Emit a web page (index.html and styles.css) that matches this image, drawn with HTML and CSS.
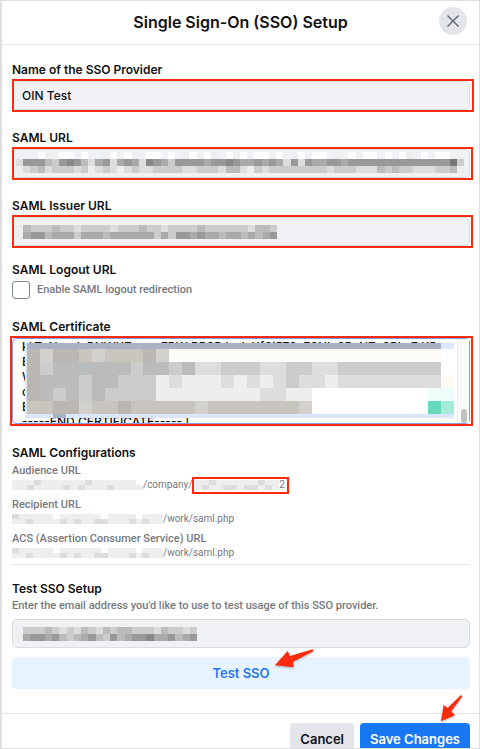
FILE: index.html
```html
<!DOCTYPE html>
<html lang="en">
<head>
    <meta charset="UTF-8">
    <meta name="viewport" content="width=device-width, initial-scale=1.0">
    <title>Single Sign-On (SSO) Setup</title>
    <link rel="stylesheet" href="styles.css">
</head>
<body>

<div class="dialog" role="dialog" aria-labelledby="dialogTitle">
    <header class="dialog-header">
        <h1 id="dialogTitle">Single Sign-On (SSO) Setup</h1>
        <button class="close" type="button" aria-label="Close">
            <svg width="12" height="12" viewBox="0 0 12 12"><path d="M0.5 0.5L11.5 11.5M11.5 0.5L0.5 11.5"/></svg>
        </button>
    </header>

    <form class="dialog-body">
        <!-- Provider fields -->
        <div class="field">
            <label for="providerName">Name of the SSO Provider</label>
            <div class="control highlight wide">
                <input type="text" id="providerName" value="OIN Test">
            </div>
        </div>

        <div class="field">
            <label for="samlUrl">SAML URL</label>
            <div class="control highlight">
                <input type="text" id="samlUrl">
                <svg class="mosaic url-mosaic" data-rows="...fe.ff.f..ef.fe.ff.f.ef.fe.fef.ff.f.ef.ff.e.f.ff.f.fe.f.ff.. d999bc989bda9da9ad89ac9999a9989aa9a9ad9d9aa99a999999999999997c edcbdcccdcedcdedcddccccddcccdbbdecdccccccccdcccdddbcbccdddccbe"></svg>
            </div>
        </div>

        <div class="field">
            <label for="issuerUrl">SAML Issuer URL</label>
            <div class="control highlight">
                <input type="text" id="issuerUrl">
                <svg class="mosaic issuer-mosaic" data-rows="ebcccbccdccccdcccbccdccccbccccccdbbc ea99baaacaaabaaaaaacac99a9aabaababa9"></svg>
            </div>
        </div>

        <div class="field logout">
            <span class="label">SAML Logout URL</span>
            <label class="check"><input type="checkbox"> Enable SAML logout redirection</label>
        </div>

        <!-- Certificate -->
        <div class="field">
            <label for="certificate">SAML Certificate</label>
            <div class="control highlight certificate">
                <textarea id="certificate" wrap="off">
kLT  N      L RNWXZ         EBW PPSB L   L KfSi578  FSNL SR  NZ  SRL  7 KR
E
W
c
E
-----END CERTIFICATE----- |</textarea>
                <svg class="mosaic cert-mosaic" viewBox="0 0.5 33 5.8" data-rows="mmmmmmmmmmmmmmmmmmmmmmmmmmmmmmmmn jqjjkqkkkjqwwwwwwwwwwwwwwwwwwwwwx jcbbpbbbcbbcbddcccddccddccccccccf jbbbcbbcccedeeedededcddeddddddddw jbcbcbcccceeeeeeeeddeexxxxxxxxxrr kkjjqkkjkkkkkqkkkkkkkqxxxxxxxxxgh nnmnnnnnnnnnnnnnnnnnnnnnnnnnnnnnn"></svg>
                <span class="scroll-track"><span class="scroll-thumb"></span></span>
            </div>
        </div>

        <!-- Configurations -->
        <section class="config">
            <h2>SAML Configurations</h2>
            <dl>
                <dt>Audience URL</dt>
                <dd><svg class="mosaic audience-mosaic" data-rows="eeedeeeeeedeeeeeef eedeeeededeeedeeee"></svg>/company/<span class="company-id"><svg class="mosaic id-mosaic" data-rows="eedeeeeeedee edeeddeddede"></svg>2</span></dd>
                <dt>Recipient URL</dt>
                <dd><svg class="mosaic host-mosaic" data-rows="deeeeefeeeeeefeeeefeee eedeeeededeeddeeededee"></svg>/work/saml.php</dd>
                <dt>ACS (Assertion Consumer Service) URL</dt>
                <dd><svg class="mosaic host-mosaic" data-rows="deeeeefeeeeeefeeeefeee eedeeeededeeddeeededee"></svg>/work/saml.php</dd>
            </dl>
        </section>

        <!-- Test setup -->
        <section class="test">
            <label for="testEmail">Test SSO Setup</label>
            <p>Enter the email address you'd like to use to test usage of this SSO provider.</p>
            <div class="control">
                <input type="text" id="testEmail">
                <svg class="mosaic email-mosaic" data-rows=".cccbcdcdbcdbcbbcccdbccdc ea99a9bcba9bc9ba998aa9ba9"></svg>
            </div>
            <div class="test-action">
                <button class="test-button" type="button">Test SSO</button>
                <svg class="arrow arrow-test" viewBox="102 231 126 69"><path d="M105 286L143 243L150 258L218 238L220 244L159 275L161 292Z"/></svg>
            </div>
        </section>
    </form>

    <footer class="dialog-footer">
        <button class="cancel" type="button">Cancel</button>
        <button class="save" type="button">Save Changes</button>
        <svg class="arrow arrow-save" viewBox="600 366 72 90"><path d="M603 451L611 402L623 411L663 372L667 376L634 421L645 433Z"/></svg>
    </footer>
</div>

<script src="mosaic.js"></script>
</body>
</html>
```

FILE: styles.css
```css
* {
    box-sizing: border-box;
}
body {
    margin: 0;
    height: 100vh;
    overflow: hidden;
    background-color: #fff;
    color: #101114;
    font-family: Inter, "Liberation Sans", sans-serif;
    font-size: 12px;
    line-height: 16px;
}
button, input, textarea {
    font: inherit;
    color: inherit;
    margin: 0;
}
button {
    border: none;
    border-radius: 4px;
    cursor: pointer;
    font-size: 13px;
    font-weight: 600;
    padding: 0 10px;
    height: 32px;
}
.dialog {
    height: 100%;
    overflow: hidden;
    border: 1px solid #dfdfdf;
    border-left-width: 2px;
}
.dialog-header {
    position: relative;
    display: flex;
    align-items: center;
    justify-content: center;
    height: 44px;
    padding-bottom: 2px;
    border-bottom: 1px solid #e6e7e9;
}
h1 {
    margin: 0;
    font-size: 16px;
    font-weight: 600;
}
.close {
    position: absolute;
    right: 12px;
    top: 6px;
    display: flex;
    align-items: center;
    justify-content: center;
    width: 28px;
    height: 28px;
    padding: 0;
    border-radius: 50%;
    background-color: #e4e5ea;
}
.close path {
    stroke: #606770;
    stroke-width: 1.4;
    fill: none;
}
.dialog-body {
    padding: 17px 9px 24px 10px;
}
.field {
    margin-bottom: 20px;
}
label, .label, h2 {
    display: block;
    margin: 0;
    font-size: 12px;
    font-weight: 600;
}
.control {
    position: relative;
    margin-top: 3px;
}
.control input {
    display: block;
    width: 100%;
    height: 29px;
    padding: 0 9px;
    border: 1px solid #dadce0;
    border-radius: 5px;
    background-color: #f0f1f5;
    font-weight: 500;
}
.highlight::after {
    content: "";
    position: absolute;
    inset: -2px -3px -2px 0;
    border: 2px solid #fc2b0d;
    pointer-events: none;
}
.wide::after {
    right: -4px;
}
.mosaic {
    shape-rendering: crispEdges;
}
.control .mosaic {
    position: absolute;
    left: 4px;
    top: 8px;
    height: 14px;
}
.control .url-mosaic {
    top: 3px;
    width: 448px;
    height: 21px;
}
.issuer-mosaic {
    width: 261px;
}
.email-mosaic {
    width: 181px;
}

/* Logout */
.logout {
    margin-top: -4px;
}
.check {
    display: flex;
    align-items: center;
    gap: 7px;
    margin-top: 3px;
}
.check input {
    appearance: none;
    width: 18px;
    height: 18px;
    border: 1px solid #7f8894;
    border-radius: 3px;
}
.check, .config, .test p {
    color: #76797e;
    font-family: Roboto, "Liberation Sans", sans-serif;
    font-size: 11px;
    font-weight: 500;
}

/* Certificate */
.certificate {
    height: 86px;
}
.certificate textarea {
    display: block;
    width: 100%;
    height: 100%;
    padding: 0 9px;
    border: 1px solid #7f9cf0;
    border-radius: 4px;
    background-color: #fff;
    line-height: 15px;
    font-weight: 500;
    overflow: hidden;
    resize: none;
}
.certificate::after {
    left: -2px;
}
.control .cert-mosaic {
    left: 13px;
    top: 5px;
    width: 429px;
    height: 75px;
    border-left: 2px solid #dfe8f8;
}
.scroll-track {
    position: absolute;
    top: 1px;
    right: 1px;
    bottom: 1px;
    display: flex;
    align-items: flex-end;
    justify-content: center;
    width: 12px;
    background-color: #fafafa;
    border-left: 1px solid #ececec;
}
.scroll-thumb {
    width: 6px;
    height: 14px;
    border-radius: 3px;
    background-color: #c1c1c1;
}

/* Configurations */
.config {
    padding-top: 1px;
    border-bottom: 1px solid #e4e5e8;
    line-height: 14px;
}
h2 {
    color: #101114;
    font-family: Inter, "Liberation Sans", sans-serif;
    line-height: 16px;
}
dl {
    margin: 3px 0 0;
}
dd {
    display: flex;
    align-items: center;
    height: 14px;
    margin: 0 0 6px;
    font-size: 10px;
    font-weight: 400;
}
dd:last-child {
    margin-bottom: 4px;
}
.audience-mosaic {
    width: 131px;
    height: 10px;
}
.host-mosaic {
    width: 151px;
    height: 10px;
}
.company-id {
    display: flex;
    align-items: center;
    justify-content: flex-end;
    height: 17px;
    padding: 0 2px 0 1px;
    border: 2px solid #fc2b0d;
}
.id-mosaic {
    width: 84px;
    height: 10px;
}

/* Test setup */
.test {
    padding-top: 16px;
}
.test p {
    margin: 1px 0 0;
}
.test .control {
    margin-top: 5px;
}
.test-action {
    position: relative;
    margin-top: 9px;
}
.test-button {
    width: 100%;
    background-color: #e7f3ff;
    color: #2577f1;
}
.dialog-footer {
    position: relative;
    display: flex;
    justify-content: flex-end;
    gap: 6px;
    padding: 9px 9px 9px 10px;
    border-top: 1px solid #e4e5e8;
}
.cancel {
    background-color: #e4e5ea;
}
.save {
    background-color: #1877f2;
    color: #fff;
}
.arrow {
    position: absolute;
    fill: #fc2b0d;
    filter: drop-shadow(0 1px 1px rgba(0, 0, 0, 0.3));
    pointer-events: none;
}
.arrow-test {
    left: calc(50% + 33px);
    top: -10px;
    width: 42px;
    height: 23px;
}
.arrow-save {
    right: 15px;
    top: -21px;
    width: 24px;
    height: 30px;
}
```

FILE: mosaic.js
```js
// Draws the pixelated areas: one character per cell, rows split by spaces.
// Hex digits are greys, the other letters are tints.
const tints = {
    m: '#aab2c2', n: '#dbe6fa', g: '#66d9ba', h: '#a3ebd6', w: '#fcfbf6',
    k: '#c8c5bf', j: '#bab7b2', p: '#b7bcbc', q: '#d3d1cd', r: '#effdfa', x: '#ffffff'
};

document.querySelectorAll('.mosaic').forEach(svg => {
    const rows = svg.dataset.rows.trim().split(' ');
    if (!svg.hasAttribute('viewBox')) {
        svg.setAttribute('viewBox', '0 0 ' + rows[0].length + ' ' + rows.length);
    }
    svg.setAttribute('preserveAspectRatio', 'none');

    rows.forEach((row, y) => {
        [...row].forEach((cell, x) => {
            if (cell === '.') return;
            const rect = document.createElementNS('http://www.w3.org/2000/svg', 'rect');
            rect.setAttribute('x', x);
            rect.setAttribute('y', y);
            rect.setAttribute('width', 1);
            rect.setAttribute('height', 1);
            rect.setAttribute('fill', tints[cell] || '#' + cell.repeat(3));
            svg.appendChild(rect);
        });
    });
});
```
